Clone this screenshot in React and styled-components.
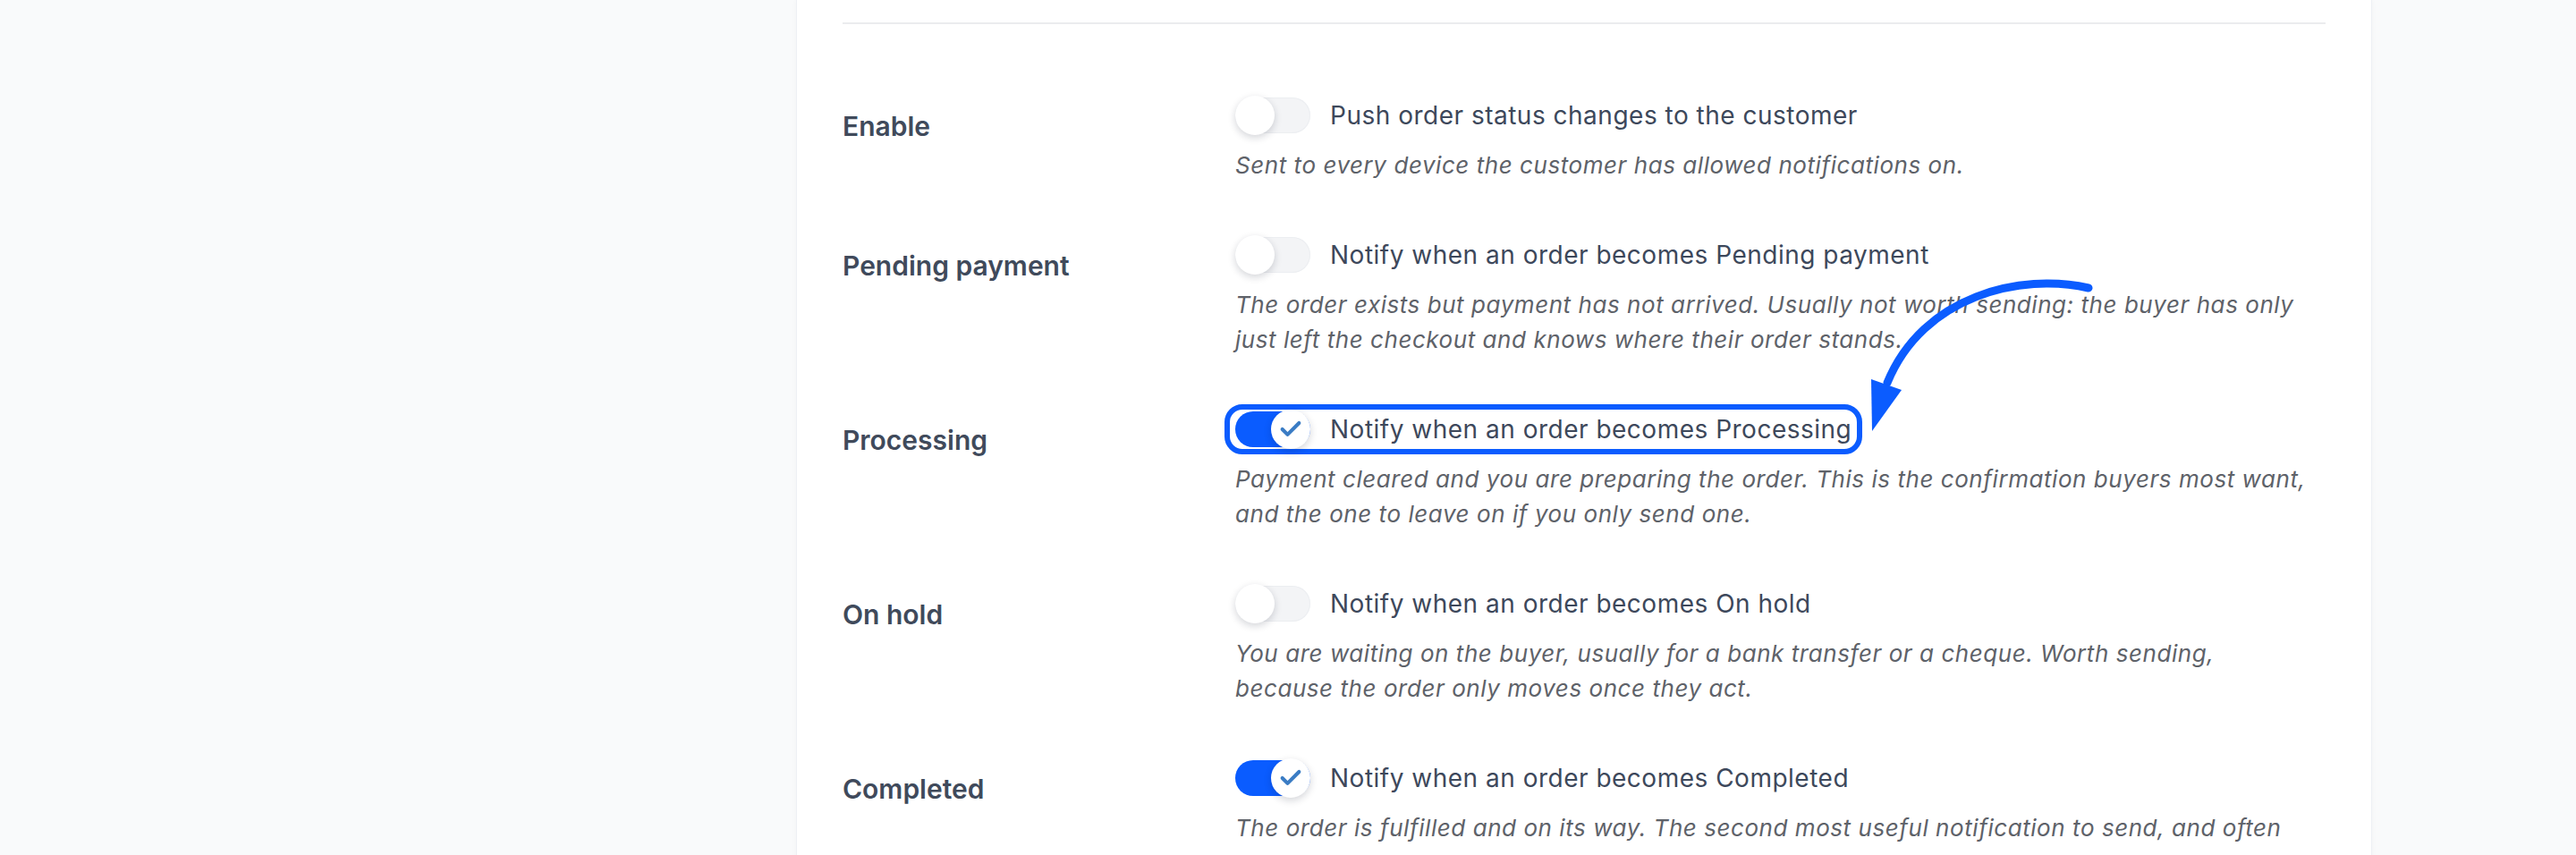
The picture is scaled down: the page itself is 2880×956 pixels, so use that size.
import React from 'react'
import styled, { createGlobalStyle } from 'styled-components'
import { Check } from 'lucide-react'

const GlobalStyle = createGlobalStyle`
    html, body {
        margin: 0;
        padding: 0;
    }
    body {
        background: #f9fafb;
        font-family: Inter, "Noto Sans", sans-serif;
        overflow: hidden;
        -webkit-font-smoothing: antialiased;
    }
`;

const Page = styled.div`
    position: relative;
    display: grid;
    grid-template-columns: 890px 1762px 1fr;
    height: 956px;
    overflow: hidden;
`;

const Gutter = styled.div``;

const Card = styled.section`
    background: #ffffff;
    border-left: 1px solid #eef0f4;
    border-right: 1px solid #eef0f4;
    box-shadow: 0 0 6px rgba(15, 23, 42, 0.03);
    padding: 25px 51px 0;
`;

const Divider = styled.div`
    height: 2px;
    background: #ebecee;
`;

const List = styled.div`
    padding-top: 50px;
`;

const Row = styled.div`
    display: grid;
    grid-template-columns: 439px 1fr;
    padding: 30px 0 29px;
`;

const Label = styled.div`
    padding-top: 14px;
    font-size: 30px;
    line-height: 40px;
    font-weight: 600;
    color: #404a5b;
`;

const Field = styled.div`
    display: flex;
    flex-direction: column;
    align-items: flex-start;
`;

const Control = styled.label`
    display: inline-flex;
    align-items: center;
    gap: 22px;
    height: 44px;
    padding: 0 6px;
    margin-left: -6px;
    border-radius: 14px;
    outline: ${props => props.$highlight ? '6px solid #0b5cff' : 'none'};
`;

const Track = styled.span`
    position: relative;
    flex-shrink: 0;
    width: 84px;
    height: 40px;
    border-radius: 20px;
    background: ${props => props.$on ? '#0a5cff' : '#f3f4f6'};
    box-shadow: ${props => props.$on ? 'none' : 'inset 0 0 0 1px #eceef1'};
`;

const Knob = styled.span`
    position: absolute;
    top: -2px;
    left: ${props => props.$on ? '40px' : '0'};
    width: 44px;
    height: 44px;
    border-radius: 50%;
    background: #ffffff;
    box-shadow: 0 3px 8px rgba(15, 23, 42, 0.18);
    display: flex;
    align-items: center;
    justify-content: center;
    color: #3a7cc4;
`;

const ControlText = styled.span`
    font-size: 28px;
    line-height: 44px;
    letter-spacing: 0.5px;
    color: #3d485b;
    white-space: nowrap;
`;

const Desc = styled.div`
    margin-top: 14px;
    font-size: 26px;
    line-height: 39px;
    letter-spacing: 0.55px;
    font-style: italic;
    color: #5e6269;
    white-space: nowrap;
`;

const Overlay = styled.svg`
    position: absolute;
    left: 0;
    top: 0;
    width: 2880px;
    height: 956px;
    pointer-events: none;
`;

const rows = [
    {
        label: 'Enable',
        text: 'Push order status changes to the customer',
        desc: ['Sent to every device the customer has allowed notifications on.'],
        on: false,
    },
    {
        label: 'Pending payment',
        text: 'Notify when an order becomes Pending payment',
        desc: [
            'The order exists but payment has not arrived. Usually not worth sending: the buyer has only',
            'just left the checkout and knows where their order stands.',
        ],
        on: false,
    },
    {
        label: 'Processing',
        text: 'Notify when an order becomes Processing',
        desc: [
            'Payment cleared and you are preparing the order. This is the confirmation buyers most want,',
            'and the one to leave on if you only send one.',
        ],
        on: true,
        highlight: true,
    },
    {
        label: 'On hold',
        text: 'Notify when an order becomes On hold',
        desc: [
            'You are waiting on the buyer, usually for a bank transfer or a cheque. Worth sending,',
            'because the order only moves once they act.',
        ],
        on: false,
    },
    {
        label: 'Completed',
        text: 'Notify when an order becomes Completed',
        desc: [
            'The order is fulfilled and on its way. The second most useful notification to send, and often',
        ],
        on: true,
    },
]

const Switch = ({ on }) => (
    <Track $on={on}>
        <Knob $on={on}>
            {on && <Check size={28} strokeWidth={3.5} />}
        </Knob>
    </Track>
)

const SettingRow = ({ item }) => (
    <Row>
        <Label>{item.label}</Label>
        <Field>
            <Control $highlight={item.highlight}>
                <Switch on={item.on} />
                <ControlText>{item.text}</ControlText>
            </Control>
            <Desc>
                {item.desc.map((line, i) => (
                    <React.Fragment key={i}>
                        {i > 0 && <br />}
                        {line}
                    </React.Fragment>
                ))}
            </Desc>
        </Field>
    </Row>
)

const App = () => {
    return (
        <Page>
            <GlobalStyle />
            <Gutter />
            <Card>
                <Divider />
                <List>
                    {rows.map(item => (
                        <SettingRow item={item} key={item.label} />
                    ))}
                </List>
            </Card>
            <Gutter />
            <Overlay viewBox="0 0 2880 956">
                <path
                    d="M2335 322 C 2260 305, 2150 330, 2110 428"
                    fill="none"
                    stroke="#0b5cff"
                    strokeWidth="9"
                    strokeLinecap="round"
                />
                <polygon points="2092,424 2126,436 2093,482" fill="#0b5cff" />
            </Overlay>
        </Page>
    )
}

export default App
